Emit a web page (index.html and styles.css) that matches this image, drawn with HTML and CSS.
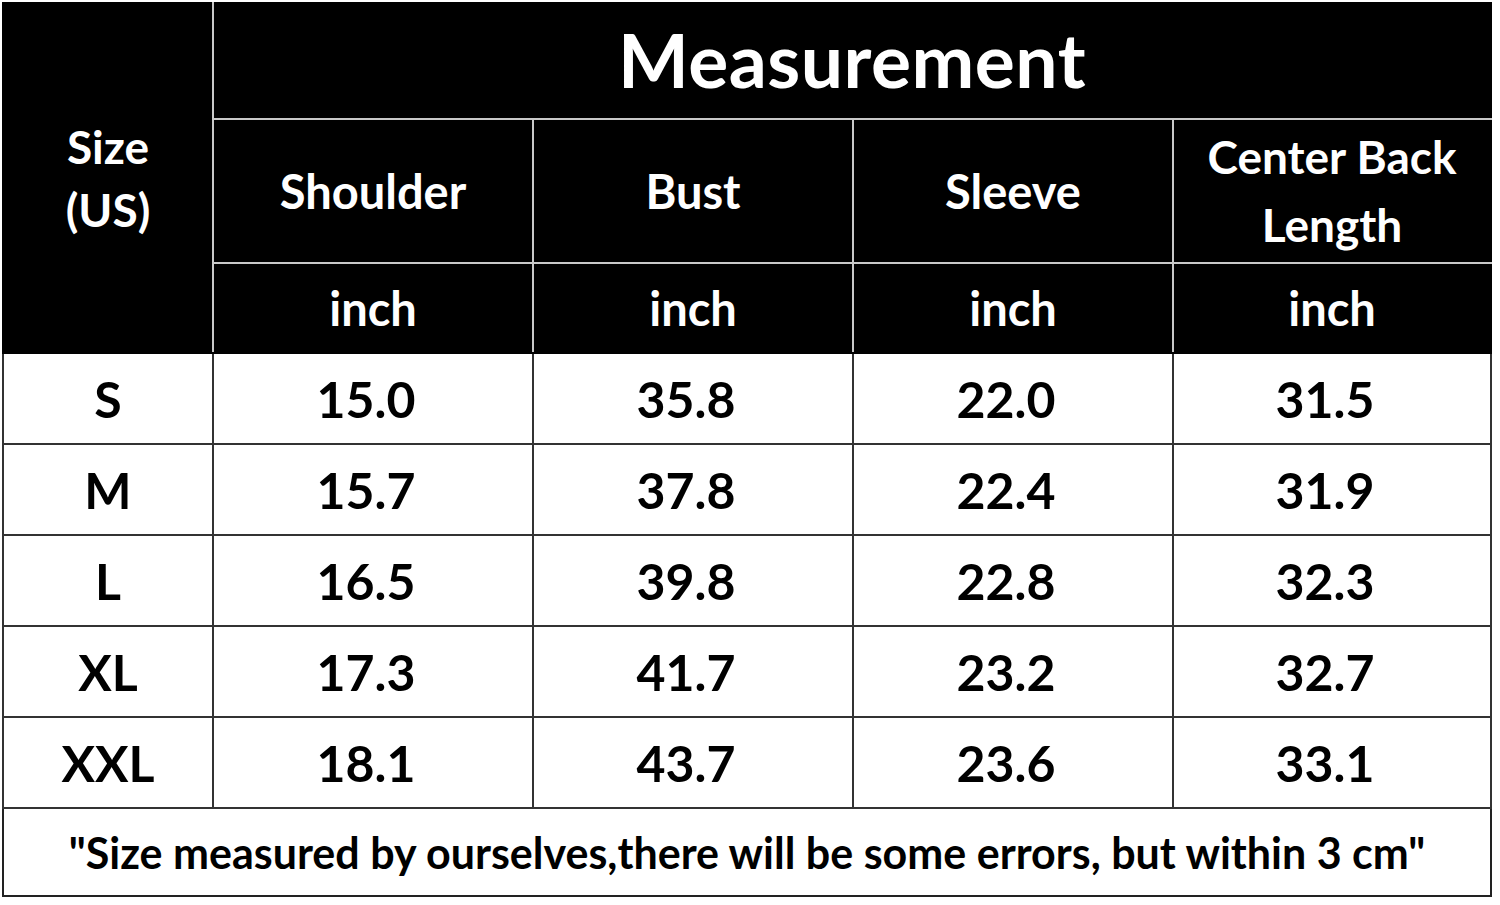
FILE: index.html
```html
<!DOCTYPE html>
<html>
<head>
<meta charset="utf-8">
<link rel="stylesheet" href="styles.css">
</head>
<body>
<div class="wrap">
<table class="chart">
  <colgroup>
    <col class="c-size"><col class="c-val"><col class="c-val"><col class="c-val"><col class="c-last">
  </colgroup>
  <thead>
    <tr class="r-title">
      <th rowspan="3" class="size-head">Size<br>(US)</th>
      <th colspan="4" class="title">Measurement</th>
    </tr>
    <tr class="r-labels">
      <th>Shoulder</th>
      <th>Bust</th>
      <th>Sleeve</th>
      <th class="two-line">Center Back<br>Length</th>
    </tr>
    <tr class="r-units">
      <th>inch</th>
      <th>inch</th>
      <th>inch</th>
      <th>inch</th>
    </tr>
  </thead>
  <tbody>
    <tr><td class="size">S</td><td>15.0</td><td>35.8</td><td>22.0</td><td>31.5</td></tr>
    <tr><td class="size">M</td><td>15.7</td><td>37.8</td><td>22.4</td><td>31.9</td></tr>
    <tr><td class="size">L</td><td>16.5</td><td>39.8</td><td>22.8</td><td>32.3</td></tr>
    <tr><td class="size">XL</td><td>17.3</td><td>41.7</td><td>23.2</td><td>32.7</td></tr>
    <tr><td class="size">XXL</td><td>18.1</td><td>43.7</td><td>23.6</td><td>33.1</td></tr>
  </tbody>
  <tfoot>
    <tr><td colspan="5" class="note">"Size measured by ourselves,there will be some errors, but within 3 cm"</td></tr>
  </tfoot>
</table>
</div>
</body>
</html>
```

FILE: styles.css
```css
html, body {
  margin: 0;
  padding: 0;
  background: #ffffff;
}

.wrap {
  padding: 2px 0 0 2px;
}

.chart {
  border-collapse: collapse;
  table-layout: fixed;
  width: 1488px;
  font-family: Lato, "Liberation Sans", sans-serif;
  font-weight: 700;
  text-align: center;
  border: 2px solid #111;
}

.c-size { width: 210px; }
.c-val { width: 320px; }
.c-last { width: 318px; }

.chart th {
  background: #000;
  color: #fff;
  font-weight: 700;
  border: 2px solid #c9c9c9;
  padding: 0;
  font-size: 47px;
}

.chart thead tr:first-child th {
  border-top-color: #000;
}
.chart thead th.size-head {
  border-left-color: #000;
  border-bottom-color: #000;
  font-size: 46px;
  line-height: 63px;
}
.chart thead tr th:last-child {
  border-right-color: #000;
}
.chart thead tr.r-units th {
  border-bottom-color: #000;
}

.r-title { height: 116px; }
.r-labels { height: 144px; }
.r-units { height: 90px; }

.chart th.title {
  font-size: 75px;
  letter-spacing: 0.5px;
  padding-bottom: 4px;
}

.chart th.two-line {
  font-size: 46px;
  line-height: 68px;
}

.chart td {
  border: 2px solid #333;
  color: #000;
  font-size: 50px;
  padding: 0 14px 0 0;
  height: 89px;
}

.chart td.size {
  padding: 0;
}

.chart tbody tr:first-child td {
  border-top-color: #000;
}

.chart td.note {
  font-size: 43px;
  height: 86px;
  padding: 0;
  border-color: #222;
}
```
